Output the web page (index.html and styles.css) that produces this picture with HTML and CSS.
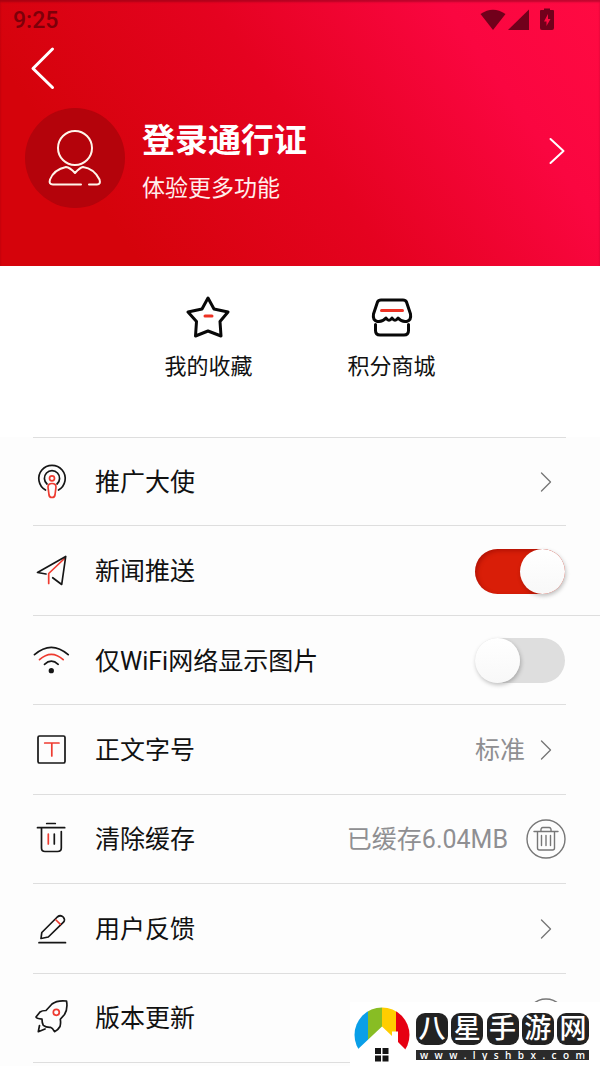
FILE: index.html
```html
<!DOCTYPE html>
<html lang="zh-CN">
<head>
<meta charset="utf-8">
<meta name="viewport" content="width=device-width, initial-scale=1">
<title>个人中心</title>
<link rel="stylesheet" href="styles.css">
</head>
<body>
<div class="page">
  <header class="hero">
    <div class="status">
      <span class="clock">9:25</span>
      <svg class="status-icons" width="76" height="24" viewBox="0 0 76 24" aria-hidden="true">
        <path d="M0.500 6 Q13 -2.500 25.500 6 L13 22 Z"/>
        <path d="M28 22 L49 1.500 V22 Z"/>
        <path fill-rule="evenodd" d="M60 3 Q60 2 61 2 H64 V0.500 H70 V2 H73 Q74 2 74 3 V20 Q74 22 72 22 H62 Q60 22 60 20 Z M68 6 L64 13.500 H66.500 V18 L70.500 11 H68 Z"/>
      </svg>
    </div>
    <button class="back" type="button" aria-label="返回">
      <svg width="26" height="44" viewBox="0 0 26 44"><path d="M22.500 3 L3 22.500 L22.500 41.500"/></svg>
    </button>
    <a class="profile" href="#login">
      <span class="avatar">
        <svg width="60" height="64" viewBox="0 0 60 64">
          <circle cx="30" cy="22" r="17"/>
          <path d="M36 58.500 H8 Q3.500 58.500 5 53.500 Q9 43.500 21 41 Q25 41.500 30 47 Q35 41.500 38 41 Q49 42.500 54.500 53.500 Q56 58.500 52 58.500 H44"/>
        </svg>
      </span>
      <span class="profile-text">
        <strong class="profile-title">登录通行证</strong>
        <span class="profile-sub">体验更多功能</span>
      </span>
      <svg class="profile-arrow" width="18" height="28" viewBox="0 0 18 28"><path d="M2.500 2 L15.500 14 L2.500 26"/></svg>
    </a>
  </header>

  <nav class="shortcuts">
    <a class="shortcut" href="#favorites">
      <svg width="44" height="44" viewBox="0 0 44 44">
        <path d="M22 3 L28 14 L42 17 L34 26.500 L35 41 L22 36 L9.500 41 L10.500 26.500 L2 17 L16 14 Z"/>
        <path class="red" d="M19 21 H26"/>
      </svg>
      <span>我的收藏</span>
    </a>
    <a class="shortcut" href="#mall">
      <svg width="44" height="44" viewBox="0 0 44 44">
        <path d="M11 5 H33 Q35.500 5 36.500 7 L40.500 19 C42 28 33 28.500 28 23 Q25 27.500 22 23 Q19 27.500 16 23 C11 28.500 2 28 3.500 19 L7.500 7 Q8.500 5 11 5 Z"/>
        <path d="M5.500 29.500 V35.500 Q5.500 40 10 40 H34 Q38.500 40 38.500 35.500 V29.500"/>
        <path class="red" d="M11.500 15.500 H32.500"/>
      </svg>
      <span>积分商城</span>
    </a>
  </nav>

  <ul class="settings">
    <li class="row">
      <svg class="icon" width="38" height="38" viewBox="0 0 38 38">
        <path d="M12.500 27 A13.200 13.200 0 1 1 25.500 27"/>
        <path d="M14 21 A7.600 7.600 0 1 1 24 21"/>
        <g class="red"><circle cx="19" cy="15.300" r="2.500"/><path d="M15 24 Q15 20.500 19 20.500 Q23 20.500 23 24 L22 32 Q21.500 34.500 19 34.500 Q16.500 34.500 16 32 Z"/></g>
      </svg>
      <a class="label" href="#ambassador">推广大使</a>
      <svg class="arrow" width="12" height="20" viewBox="0 0 12 20"><path d="M1.500 1 L10.500 10 L1.500 19"/></svg>
    </li>
    <li class="row row-wide">
      <svg class="icon" width="38" height="38" viewBox="0 0 38 38">
        <path class="red" d="M31.500 6.500 L15.700 21.500 V31.500"/>
        <path d="M13 22 L4.500 20.500 L32.700 4.500 L28.700 32.500 L19.700 25.700"/>
      </svg>
      <label class="label" for="push">新闻推送</label>
      <input class="switch" id="push" type="checkbox" checked>
    </li>
    <li class="row">
      <svg class="icon" width="38" height="38" viewBox="0 0 38 38">
        <path d="M1.500 12.700 Q18.300 -2 35.200 12.700"/>
        <path class="red" d="M6.500 17.700 Q18.300 7 30.200 17.700"/>
        <path d="M11.500 22.300 Q18.300 16 25.200 22.300"/>
        <circle class="solid" cx="18.300" cy="28.700" r="1.800"/>
      </svg>
      <label class="label" for="wifi">仅WiFi网络显示图片</label>
      <input class="switch" id="wifi" type="checkbox">
    </li>
    <li class="row">
      <svg class="icon" width="38" height="38" viewBox="0 0 38 38">
        <rect x="5" y="5" width="27" height="27" rx="1.500"/>
        <path class="red" d="M11.700 12 H26 M18.800 12 V25"/>
      </svg>
      <a class="label" href="#font-size">正文字号</a>
      <span class="value">标准</span>
      <svg class="arrow" width="12" height="20" viewBox="0 0 12 20"><path d="M1.500 1 L10.500 10 L1.500 19"/></svg>
    </li>
    <li class="row">
      <svg class="icon" width="38" height="38" viewBox="0 0 38 38">
        <path d="M13.700 3.500 H22.300 M4.500 7.700 H31.700 M8.500 7.700 V28 Q8.500 31.500 12 31.500 H24.500 Q28.300 31.500 28.300 28 V11.500 M21.300 14 V24"/>
        <path class="red" d="M15.300 14 V24"/>
      </svg>
      <span class="label">清除缓存</span>
      <span class="value">已缓存6.04MB</span>
      <button class="round" type="button" aria-label="清除缓存">
        <svg width="40" height="40" viewBox="0 0 40 40">
          <circle cx="20" cy="20" r="19"/>
          <path d="M8 12.500 H32 M15 12.500 Q14.500 8.500 17 8.500 H23 Q25.500 8.500 25 12.500 M11.500 12.500 V29 Q11.500 31 13.500 31 H26.500 Q28.500 31 28.500 29 V12.500 M15.500 16.500 V26.500 M20 16.500 V26.500 M24.500 16.500 V26.500"/>
        </svg>
      </button>
    </li>
    <li class="row">
      <svg class="icon" width="38" height="38" viewBox="0 0 38 38">
        <path d="M6 32.700 H32.500"/>
        <path d="M8 28.500 L8.800 22.500 L24.300 7 Q27.500 4.500 30.200 7 Q32.500 9.500 30.500 12.200 L15.300 27 Z"/>
        <path class="red" d="M23 10 L27.200 14.200"/>
      </svg>
      <a class="label" href="#feedback">用户反馈</a>
      <svg class="arrow" width="12" height="20" viewBox="0 0 12 20"><path d="M1.500 1 L10.500 10 L1.500 19"/></svg>
    </li>
    <li class="row">
      <svg class="icon" width="38" height="38" viewBox="0 0 38 38">
        <path d="M33.500 2 Q24 1 19 5 L13 11.500 Q9 11.500 7 13 L3 18 Q3.500 19.500 9 20.200 Q9 24 10.300 26.300 Q13 28.500 17.500 28.300 Q19.500 29 21.500 32.700 Q25.500 30.500 27 27.500 Q28 24 27.300 20.300 L31.500 15.500 Q35 10 33.500 2 Z"/>
        <path d="M6.500 26.500 L5.300 32.700 L12 30"/>
        <circle class="red" cx="23.300" cy="13.300" r="3"/>
      </svg>
      <span class="label">版本更新</span>
      <button class="round" type="button" aria-label="检查更新">
        <svg width="40" height="40" viewBox="0 0 40 40"><circle cx="20" cy="20" r="19"/><path d="M20 29 V11 M13 18 L20 11 L27 18"/></svg>
      </button>
    </li>
  </ul>

  <aside class="badge">
    <svg width="56" height="58" viewBox="0 0 56 58" aria-hidden="true">
      <defs><clipPath id="dome"><circle cx="28" cy="29" r="27.500"/></clipPath></defs>
      <g clip-path="url(#dome)">
        <rect class="blue" width="14" height="44"/>
        <rect class="green" x="14" width="14" height="44"/>
        <rect class="yellow" x="28" width="14" height="44"/>
        <rect class="crimson" x="42" width="14" height="44"/>
      </g>
      <path class="house" d="M2 45 L28 20.500 L38 30 V25.500 H44 V36 L53 45 V58 H2 Z"/>
      <path class="window" d="M21 42 H27 V48 H21 Z M28.500 42 H34.500 V48 H28.500 Z M21 49.500 H27 V55.500 H21 Z M28.500 49.500 H34.500 V55.500 H28.500 Z"/>
    </svg>
    <div class="badge-text">
      <div class="tiles"><span>八</span><span>星</span><span>手</span><span>游</span><span>网</span></div>
      <div class="site">w w w . l y s h b x . c o m</div>
    </div>
  </aside>
</div>
</body>
</html>
```
FILE: styles.css
```css
* { box-sizing: border-box; }

body {
  margin: 0;
  font-family: Roboto, "Noto Sans CJK SC", sans-serif;
  font-size: 25px;
  color: #111;
  background: #fdfdfd;
}

a { color: inherit; text-decoration: none; }
button { padding: 0; border: 0; background: none; cursor: pointer; }
svg { display: block; flex: none; fill: none; stroke-linecap: round; stroke-linejoin: round; }

.page {
  position: relative;
  display: flex;
  flex-direction: column;
  min-height: 100vh;
}

/* Header */
.hero {
  padding-bottom: 58px;
  background: linear-gradient(55deg, #d5030b 18%, #e50220 50%, #fa0640 80%, #ff0a42);
  box-shadow: inset 0 2px 2px rgba(100, 0, 20, 0.4);
  color: #fff;
}
.status {
  display: flex;
  justify-content: space-between;
  align-items: center;
  height: 40px;
  padding: 0 44px 0 13px;
}
.clock { padding-top: 2px; font-size: 23px; font-weight: 500; line-height: 40px; color: #7d0009; }
.status-icons { fill: #71001b; }
.back { display: block; margin: 6px 0 0 30px; }
.back svg { stroke: #fff; stroke-width: 3; }
.profile {
  display: flex;
  align-items: flex-start;
  margin-top: 18px;
  padding: 0 34px 0 25px;
}
.avatar {
  display: grid;
  place-items: center;
  width: 100px;
  height: 100px;
  border-radius: 50%;
  background: #b4030b;
}
.avatar svg { stroke: #fff5ea; stroke-width: 2; }
.profile-text { display: grid; gap: 12px; flex: 1; padding: 13px 0 0 17px; }
.profile-title { font-size: 33px; line-height: 40px; font-weight: 700; }
.profile-sub { font-size: 23px; line-height: 32px; color: #ffeeec; }
.profile-arrow { margin-top: 29px; stroke: #fff; stroke-width: 2; }

/* Shortcuts */
.shortcuts {
  display: flex;
  justify-content: center;
  gap: 95px;
  padding: 29px 0 55px;
  background: #fff;
}
.shortcut {
  display: grid;
  justify-items: center;
  gap: 13px;
  font-size: 22px;
  line-height: 30px;
}
.shortcut svg { stroke: #080808; stroke-width: 3; }
.shortcut .red { stroke: #ee3224; }

/* Settings */
.settings {
  display: grid;
  flex: 1;
  grid-auto-rows: minmax(80px, 1fr);
  margin: 0;
  padding: 0 0 3px 33px;
  list-style: none;
}
.row {
  display: flex;
  align-items: center;
  margin-right: 34px;
  padding-top: 1px;
  border-bottom: 1px solid #dedede;
}
.row:first-child { border-top: 1px solid #dedede; }
.row-wide { margin-right: 0; padding-right: 34px; }
.icon { margin-right: 24px; stroke: #161616; stroke-width: 1.7; }
.icon .red { stroke: #ee3b30; }
.icon .solid { fill: #161616; }
.label { flex: 1; padding-top: 2px; line-height: 36px; }
.value { padding-top: 2px; line-height: 36px; color: #8f8f92; }
.arrow { margin: 0 14px 0 15px; stroke: #777; stroke-width: 1.4; }
.round { margin-left: 18px; }
.round svg { stroke: #777; stroke-width: 1.4; }

.switch {
  appearance: none;
  width: 90px;
  height: 45px;
  margin: 0 1px 0 0;
  border-radius: 23px;
  background: #dedede;
  cursor: pointer;
}
.switch::before {
  content: "";
  display: block;
  width: 45px;
  height: 45px;
  border-radius: 50%;
  background: linear-gradient(#fff, #f8f8f8);
  box-shadow: 1px 2px 4px rgba(0, 0, 0, 0.25);
}
.switch:checked {
  background: #d91e08;
  box-shadow: inset 2px 2px 4px rgba(120, 0, 0, 0.4);
}
.switch:checked::before { margin-left: auto; }

/* Site badge over the lower right corner */
.badge {
  position: absolute;
  right: 0;
  bottom: 0;
  display: flex;
  gap: 6px;
  width: 250px;
  padding: 4px 11px 2px 4px;
  background: #fff;
}
.badge .blue { fill: #0a9fe8; }
.badge .green { fill: #88bd24; }
.badge .yellow { fill: #ffcd00; }
.badge .crimson { fill: #e60012; }
.badge .house { fill: #fff; }
.badge .window { fill: #151515; }
.badge-text { display: grid; gap: 5px; flex: 1; align-content: start; padding-top: 7px; }
.tiles { display: flex; justify-content: space-between; }
.tiles span {
  width: 32px;
  border-radius: 9px;
  background: #222;
  color: #fff;
  font-size: 27px;
  line-height: 32px;
  font-weight: 500;
  text-align: center;
}
.site {
  padding: 0 4px;
  background: #2b2b2b;
  color: #fff;
  font-family: "Open Sans", sans-serif;
  font-size: 10px;
  font-weight: 600;
  line-height: 10px;
  text-align-last: justify;
}
```
